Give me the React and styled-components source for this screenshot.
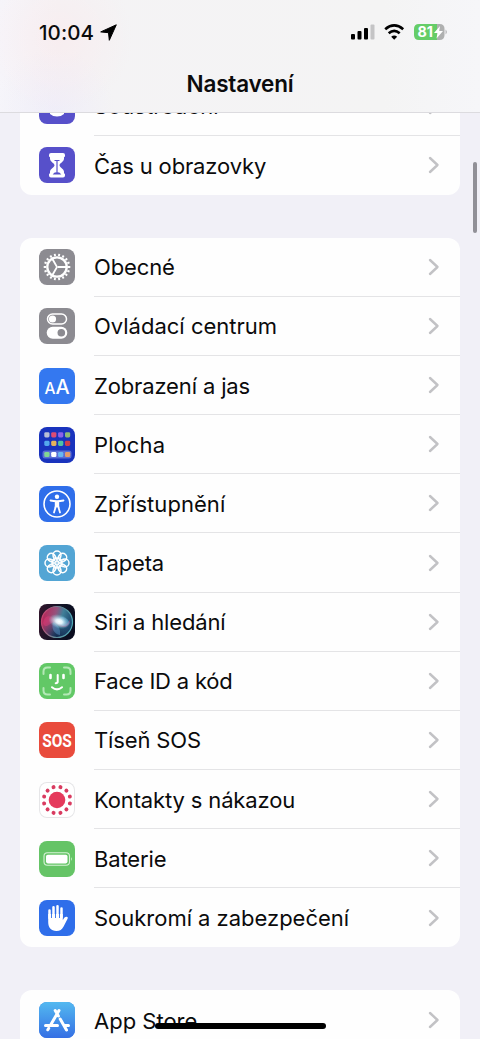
import styled, { createGlobalStyle } from 'styled-components'

const GlobalStyle = createGlobalStyle`
* { box-sizing: border-box; }
body {
  margin: 0;
  background: #f1f0f7;
  font-family: Inter, "Liberation Sans", sans-serif;
  color: #0b0b0c;
}
`
const Screen = styled.div`
position: relative;
height: 1039px;
overflow: hidden;
background: #f1f0f7;
`
const Header = styled.header`
position: relative;
z-index: 1;
display: flex;
flex-direction: column;
height: 112.500px;
border-bottom: 1px solid #dcdbdf;
background:
  radial-gradient(circle 75px at 58px 38px, rgba(255, 226, 229, 0.35), transparent),
  radial-gradient(circle 60px at 55px 108px, rgba(235, 233, 252, 0.5), transparent),
  linear-gradient(90deg, #f6f5fa 0%, #f4f3f5 12%, #f4f4f4 80%, #f6f6f9 100%);
`
const StatusBar = styled.div`
display: flex;
align-items: center;
justify-content: space-between;
height: 64px;
padding: 0 32px 0 39px;
`
const Clock = styled.div`
display: flex;
align-items: center;
gap: 6px;
font-size: 20.500px;
font-weight: 500;
letter-spacing: 0.1px;
`
const Signals = styled.div`
display: flex;
align-items: center;
`
const Title = styled.h1`
margin: 0;
text-align: center;
font-size: 22.500px;
font-weight: 600;
line-height: 40px;
letter-spacing: -0.2px;
`
const Content = styled.main`
display: flex;
flex-direction: column;
gap: 43px;
margin-top: -36px;
padding: 0 20px;
`
const Group = styled.section`
border-radius: 12px;
background: #fefefe;
`
const Row = styled.div`
display: flex;
align-items: center;
height: 59.150px;
padding-left: 19px;

&:last-child > div { border-bottom: none; }
`
const RowBody = styled.div`
display: flex;
flex: 1;
align-items: center;
justify-content: space-between;
height: 100%;
margin-left: 19px;
padding-right: 20px;
border-bottom: 1px solid #e4e4e6;
`
const Label = styled.span`
padding-top: 1px;
font-size: 22px;
line-height: 30px;
letter-spacing: ${(p) => p.$spacing}px;
white-space: nowrap;
`
const Icon = styled.svg`
display: block;
flex: none;
width: 36px;
height: 36px;
border-radius: 8px;
background: ${(p) => p.$bg};
box-shadow: ${(p) => (p.$outlined ? 'inset 0 0 0 1px #e6e6e8' : 'none')};
`
const ScrollThumb = styled.div`
position: absolute;
top: 162px;
right: 3px;
width: 4px;
height: 71px;
border-radius: 2px;
background: #919097;
`
const HomeIndicator = styled.div`
position: absolute;
left: 155px;
top: 1023px;
width: 171px;
height: 6px;
border-radius: 3px;
background: #000;
`

const around = (n) => Array.from({ length: n }, (_, i) => (360 / n) * i)
const white = { fill: 'none', stroke: '#fff', strokeLinecap: 'round', strokeLinejoin: 'round' }
const appColors = [
  ['#b9bfd6', '#dc4c74', '#8b62ea', '#8dbb78'],
  ['#54a8ed', '#e6b35b', '#4fc2a5', '#cf3f4d'],
  ['#83d692', '#ffffff', '#69b7f2', '#e49b6c'],
]

const art = {
  focus: <path d="M24.500 22a10 9 0 0 1-14 0V8h14z" fill="#fff" transform="translate(.5 4)" />,
  hourglass: (
    <>
      <path d="M12 6h12q2 0 2 2v1q0 1-1 1.200v1.500c0 3-4.500 4.500-4.500 6.500s4.500 3.500 4.500 6.500v1.500q1 .2 1 1.300v1q0 2-2 2H12q-2 0-2-2v-1q0-1.100 1-1.300v-1.500c0-3 4.500-4.500 4.500-6.500S11 14.700 11 11.700v-1.500Q10 10 10 9V8q0-2 2-2z" fill="#fff" />
      <path d="M15.500 13.500h5M18 14v11" stroke="#5750ca" strokeWidth="1.200" />
      <path d="M13.700 27.500q1-2.500 4.300-2.500t4.300 2.500z" fill="#5750ca" />
    </>
  ),
  gear: (
    <g {...white}>
      <circle cx="18" cy="18" r="9.700" strokeWidth="2.300" />
      {around(18).map((a) => (
        <path key={a} d="M18 7V4.700" strokeWidth="1.900" strokeLinecap="butt" transform={`rotate(${a + 10} 18 18)`} />
      ))}
      {[90, 210, 330].map((a) => (
        <path key={a} d="M18 17V8" strokeWidth="1.900" transform={`rotate(${a} 18 18)`} />
      ))}
    </g>
  ),
  toggles: (
    <>
      <rect x="8.500" y="6" width="19" height="10" rx="5" {...white} strokeWidth="1.500" />
      <circle cx="13.500" cy="11" r="3.600" fill="#fff" />
      <rect x="7.700" y="18.700" width="20.600" height="12" rx="6" fill="#fff" />
      <circle cx="22.300" cy="24.700" r="3.800" fill="#8c8b91" />
    </>
  ),
  display: (
    <g fill="#fff" fontFamily="Inter, sans-serif" fontWeight="500">
      <text x="5.500" y="25.500" fontSize="15.500">A</text>
      <text x="16.500" y="25.500" fontSize="20">A</text>
    </g>
  ),
  home: (
    <>
      <rect x="3.500" y="23.500" width="29" height="8" rx="2.500" fill="#7c8de4" opacity=".65" />
      {appColors.map((line, y) =>
        line.map((c, x) => (
          <rect key={`${x}${y}`} x={5.300 + x * 6.900} y={[5.200, 13.800, 24.900][y]} width="5.200" height="5.200" rx="1.400" fill={c} />
        ))
      )}
    </>
  ),
  access: (
    <>
      <circle cx="18" cy="18" r="13" {...white} strokeWidth="1.600" />
      <circle cx="18" cy="10.700" r="2.200" fill="#fff" />
      <path d="M11.500 14.500q6.500 1.500 13 0M16.800 20.500l-1.800 6M19.200 20.500l1.800 6" {...white} strokeWidth="1.800" />
      <path d="M15.800 15h4.400v5l.3 2.500L18 21l-2.500 1.500.3-2.500z" fill="#fff" />
    </>
  ),
  flower: (
    <g {...white} strokeWidth="1.500">
      {around(8).map((a) => (
        <circle key={a} cx="18" cy="10" r="4" transform={`rotate(${a} 18 18)`} />
      ))}
      {around(8).map((a) => (
        <ellipse key={a} cx="18" cy="13.500" rx="1.700" ry="3.500" strokeWidth=".8" transform={`rotate(${a + 22.500} 18 18)`} />
      ))}
      <circle cx="18" cy="18" r="2.200" strokeWidth="1" />
    </g>
  ),
  siri: (
    <>
      <defs>
        <linearGradient id="orb" x1="0" y1=".35" x2="1" y2=".65">
          <stop offset="0" stopColor="#b82658" />
          <stop offset=".38" stopColor="#96527d" />
          <stop offset=".6" stopColor="#407f98" />
          <stop offset="1" stopColor="#153f69" />
        </linearGradient>
        <linearGradient id="rim" x1="0" y1=".4" x2="1" y2=".6">
          <stop offset="0" stopColor="#c8426f" />
          <stop offset=".5" stopColor="#638995" />
          <stop offset="1" stopColor="#50a9b5" />
        </linearGradient>
        <radialGradient id="dusk" cx=".5" cy="1" r=".6">
          <stop offset="0" stopColor="#10264c" />
          <stop offset="1" stopColor="#10264c" stopOpacity="0" />
        </radialGradient>
        <radialGradient id="glow">
          <stop offset="0" stopColor="#fff" />
          <stop offset=".3" stopColor="#e8f8ff" stopOpacity=".95" />
          <stop offset="1" stopColor="#88dcec" stopOpacity="0" />
        </radialGradient>
      </defs>
      <circle cx="18" cy="18" r="15.500" fill="url(#orb)" />
      <circle cx="18" cy="18" r="15.500" fill="url(#dusk)" />
      <circle cx="18" cy="18" r="15.500" fill="none" stroke="url(#rim)" strokeWidth="1.200" />
      <path d="M4 19c2-9 8-8 14-2s9 4 13-1c0 7-7 10-13 4S8 28 4 19z" fill="#ec3a7a" opacity=".4" />
      <path d="M18 17c3-7 10-4 13 2-5 6-9 3-13-2zM14 18c4 2 8 6 7 13-6-1-9-7-7-13z" fill="#6aa8e0" opacity=".4" />
      <ellipse cx="20" cy="17.500" rx="11" ry="7" fill="url(#glow)" transform="rotate(18 20 18)" />
    </>
  ),
  face: (
    <g {...white} strokeWidth="2">
      <path d="M4.500 11V8.500q0-4 4-4H11M25 4.500h2.500q4 0 4 4V11M31.500 25v2.500q0 4-4 4H25M11 31.500H8.500q-4 0-4-4V25" stroke="#b4e8b6" />
      <path d="M11.500 12v3M24.500 12v3" strokeWidth="2.600" />
      <path d="M18.700 12v6.500q0 1.800-2 1.800M13 24.200q5 4.300 10 0" />
    </g>
  ),
  sos: (
    <text textAnchor="middle" transform="translate(18 24.500) scale(.86 1)" fontFamily="Roboto, sans-serif" fontSize="18" fontWeight="700" fill="#fff">SOS</text>
  ),
  exposure: (
    <>
      <circle cx="18" cy="18" r="8.300" fill="#e53a5c" />
      {around(12).map((a) => (
        <circle key={a} cx="18" cy="4.700" r="2" fill="#d93b60" transform={`rotate(${a + 15} 18 18)`} />
      ))}
    </>
  ),
  battery: (
    <>
      <rect x="5" y="11.800" width="25.500" height="12.500" rx="3.500" fill="none" stroke="#d6f2d6" strokeWidth="1.100" />
      <rect x="7" y="13.700" width="21.500" height="8.700" rx="1.800" fill="#fff" />
      <path d="M32 16q1.800 2 0 4z" fill="#d6f2d6" />
    </>
  ),
  hand: (
    <>
      <path d="M10.500 18v-7.500M14.500 17V7.200M18.500 17V6.200M22.500 17V8.500" {...white} strokeWidth="2.500" />
      <path d="M9.200 14h14.600v6.200c1.200-2.600 2.200-3.600 4-3.500q1.700.3.800 2l-4 7.800c-1.700 3.200-3.600 4.500-7.200 4.500-5.500 0-8.200-3.500-8.200-9z" fill="#fff" />
      <path d="M12.500 10v8M16.500 8.500V18M20.500 9v9" stroke="#2f6eea" strokeWidth=".9" />
    </>
  ),
  store: (
    <>
      <defs>
        <linearGradient id="sky" x2="0" y2="1">
          <stop offset="0" stopColor="#53b9f0" />
          <stop offset="1" stopColor="#356fe4" />
        </linearGradient>
      </defs>
      <rect width="36" height="36" fill="url(#sky)" />
      <g {...white} strokeWidth="3">
        <path d="M20 8.500l-7.800 13.500M9.700 26.300l-.9 1.500M16.200 8.500l3.200 5.500M21.200 17l6.300 11" />
        <path d="M6.500 23.500h12M25.800 23.500h3.700" />
      </g>
    </>
  ),
}

const groups = [
  [
    { label: 'Soustředění', icon: 'focus', bg: '#5750ca', spacing: 0 },
    { label: 'Čas u obrazovky', icon: 'hourglass', bg: '#5750ca' },
  ],
  [
    { label: 'Obecné', icon: 'gear', bg: '#8c8b91' },
    { label: 'Ovládací centrum', icon: 'toggles', bg: '#8c8b91', spacing: 0 },
    { label: 'Zobrazení a jas', icon: 'display', bg: '#3478f0' },
    { label: 'Plocha', icon: 'home', bg: '#1933bd', spacing: 0.1 },
    { label: 'Zpřístupnění', icon: 'access', bg: '#2f6eea', spacing: 0.05 },
    { label: 'Tapeta', icon: 'flower', bg: '#53a5d4' },
    { label: 'Siri a hledání', icon: 'siri', bg: 'linear-gradient(100deg, #32152b, #111326 55%, #070a1c)' },
    { label: 'Face ID a kód', icon: 'face', bg: '#62c866', spacing: -0.2 },
    { label: 'Tíseň SOS', icon: 'sos', bg: '#e94b3c' },
    { label: 'Kontakty s nákazou', icon: 'exposure', bg: '#fff', outlined: true },
    { label: 'Baterie', icon: 'battery', bg: '#65c466' },
    { label: 'Soukromí a zabezpečení', icon: 'hand', bg: '#2f6eea', spacing: -0.02 },
  ],
  [{ label: 'App Store', icon: 'store', bg: '#3b80e8', spacing: 0 }],
]

const Chevron = () => (
  <svg width="12" height="18" viewBox="0 0 12 18">
    <path d="M2 2l7.500 7L2 16" fill="none" stroke="#c2c2c5" strokeWidth="2.400" strokeLinecap="round" strokeLinejoin="round" />
  </svg>
)

const SettingRow = ({ item }) => (
  <Row>
    <Icon viewBox="0 0 36 36" $bg={item.bg} $outlined={item.outlined}>{art[item.icon]}</Icon>
    <RowBody>
      <Label $spacing={item.spacing ?? -0.14}>{item.label}</Label>
      <Chevron />
    </RowBody>
  </Row>
)

const StatusIcons = () => (
  <Signals>
    <svg width="97" height="20" viewBox="0 0 97 20">
      <rect x="0" y="12" width="4" height="5.500" rx="1" />
      <rect x="6.500" y="9" width="4" height="8.500" rx="1" />
      <rect x="13" y="6" width="4" height="11.500" rx="1" />
      <rect x="19.500" y="2.500" width="4" height="15" rx="1" fill="#c4c4c5" />
      <g fill="none" stroke="#000" strokeWidth="2.700">
        <path d="M34.200 7.200q9-7.500 18 0M37.700 11.200q5.500-4.600 11 0" />
      </g>
      <path d="M43.200 17.800l-3-3q3-2.600 6 0z" />
      <path d="M68 2h18v16H68q-5 0-5-5V7q0-5 5-5z" fill="#65cd68" />
      <path d="M86 2h2.500q5 0 5 5v6q0 5-5 5H86z" fill="#afb0b0" />
      <path d="M94.500 7.500q3 2.500 0 5z" fill="#b9b9bb" />
      <text x="66.500" y="15.200" fontFamily="Inter, sans-serif" fontSize="14.500" fontWeight="700" fill="#fff" textLength="15.500" lengthAdjust="spacingAndGlyphs">81</text>
      <path d="M89 4l-6 7h3.500l-1 5.500 6.500-7.500h-3.800z" fill="#fff" />
    </svg>
  </Signals>
)

export default function App()
{
  return (
    <Screen>
      <GlobalStyle />
      <Header>
        <StatusBar>
          <Clock>
            10:04
            <svg width="17" height="17" viewBox="0 0 17 17">
              <path d="M16.300.8L9.300 16.300 8.500 8.700.7 7.900z" stroke="#000" strokeLinejoin="round" />
            </svg>
          </Clock>
          <StatusIcons />
        </StatusBar>
        <Title>Nastavení</Title>
      </Header>
      <Content>
        {groups.map((items, i) => (
          <Group key={i}>
            {items.map((item) => (<SettingRow key={item.label} item={item} />))}
          </Group>
        ))}
      </Content>
      <ScrollThumb />
      <HomeIndicator />
    </Screen>
  )
}
